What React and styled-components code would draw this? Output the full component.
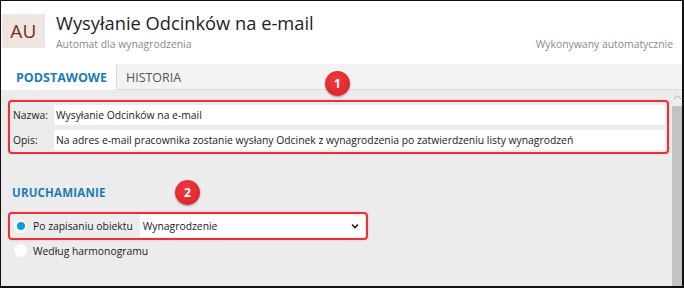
import React from "react";
import styled, { createGlobalStyle } from "styled-components";

const GlobalStyle = createGlobalStyle`
  html, body { margin: 0; padding: 0; background: #fff; }
  body { font-family: "Open Sans", "Noto Sans", sans-serif; }
`;

const Frame = styled.div`
  position: relative;
  width: 684px;
  height: 288px;
  box-sizing: border-box;
  border: 1px solid #111;
  border-right-width: 2px;
  border-bottom-width: 2px;
  display: flex;
  flex-direction: column;
  overflow: hidden;
  background: #ececec;
`;

const Header = styled.div`
  height: 63px;
  background: #fff;
  display: flex;
  align-items: flex-start;
  padding: 13px 9px 0 1px;
  box-sizing: border-box;
`;

const Avatar = styled.div`
  width: 43px;
  height: 34px;
  background: #efe5e2;
  color: #7b2d12;
  font-size: 19px;
  font-weight: 500;
  display: flex;
  align-items: center;
  justify-content: center;
  letter-spacing: 0.3px;
`;

const TitleBlock = styled.div`
  flex: 1;
  margin-left: 11px;
  display: flex;
  flex-direction: column;
`;

const Title = styled.div`
  font-size: 18.3px;
  color: #1e1e1e;
  line-height: 22px;
  margin-top: -2px;
`;

const SubRow = styled.div`
  display: flex;
  justify-content: space-between;
  font-size: 10.4px;
  color: #8a8a8a;
  margin-top: 3px;
`;

const TabBar = styled.div`
  height: 26px;
  background: #f3f3f3;
  border-bottom: 1px solid #dcdcdc;
  display: flex;
  box-sizing: border-box;
`;

const Tab = styled.div`
  padding: 0 9px 0 ${(p) => (p.$active ? "15px" : "9px")};
  display: flex;
  align-items: center;
  font-size: 12.5px;
  font-weight: ${(p) => (p.$active ? 700 : 400)};
  color: ${(p) => (p.$active ? "#1b7db3" : "#555")};
  background: ${(p) => (p.$active ? "#fff" : "transparent")};
  border-right: ${(p) => (p.$active ? "1px solid #dcdcdc" : "none")};
  height: 26px;
  box-sizing: border-box;
`;

const Body = styled.div`
  flex: 1;
  display: flex;
`;

const Content = styled.div`
  flex: 1;
  padding: 10px 3px 0 7px;
`;

const Scrollbar = styled.div`
  width: 10px;
  display: flex;
  flex-direction: column;
  align-items: center;
  padding-top: 4px;
`;

const Thumb = styled.div`
  margin-top: 6px;
  width: 10px;
  flex: 1;
  background: #c3c3c3;
`;

const Highlight = styled.div`
  border: 2px solid #e8323a;
  border-radius: 4px;
  box-shadow: 0 0 2px rgba(232, 50, 58, 0.35);
  width: ${(p) => p.$width || "auto"};
  margin-top: ${(p) => p.$mt || "0"};
  box-sizing: border-box;
`;

const FieldList = styled.div`
  display: flex;
  flex-direction: column;
  gap: 5px;
  padding: 3px 2px 2px 2px;
`;

const FieldRow = styled.div`
  display: flex;
  align-items: center;
`;

const Label = styled.div`
  width: 41px;
  font-size: 10.35px;
  color: #222;
  padding-left: 1px;
`;

const Input = styled.div`
  flex: 1;
  height: 20px;
  background: #fff;
  font-size: 10.35px;
  color: #1a1a1a;
  display: flex;
  align-items: center;
  padding-left: 2px;
`;

const Section = styled.div`
  margin-top: 31px;
  padding-left: 4px;
  font-size: 11.5px;
  font-weight: 700;
  color: #1b7db3;
  letter-spacing: 0.2px;
`;

const RadioRow = styled.div`
  display: flex;
  align-items: center;
  height: ${(p) => p.$h || "24px"};
  padding-left: ${(p) => p.$pl || "4px"};
`;

const Radio = styled.span`
  width: 13px;
  height: 13px;
  border-radius: 50%;
  background: #fff;
  box-sizing: border-box;
  display: flex;
  align-items: center;
  justify-content: center;
  margin-right: 6px;
  &::after {
    content: "";
    width: 8px;
    height: 8px;
    border-radius: 50%;
    background: ${(p) => (p.$checked ? "#0a9be0" : "transparent")};
  }
`;

const RadioLabel = styled.span`
  font-size: 10.35px;
  color: #222;
`;

const Select = styled.div`
  margin-left: 7px;
  flex: 1;
  height: 22px;
  margin-right: 1px;
  background: #fff;
  display: flex;
  align-items: center;
  justify-content: space-between;
  padding: 0 6px 0 3px;
  font-size: 10.35px;
  color: #1a1a1a;
`;

const Badge = styled.div`
  position: absolute;
  left: ${(p) => p.$x}px;
  top: ${(p) => p.$y}px;
  width: 25px;
  height: 25px;
  border-radius: 50%;
  background: radial-gradient(circle at 45% 35%, #ee3b40, #d81f26);
  box-shadow: 0 1px 2px rgba(0, 0, 0, 0.35);
  color: #fff;
  font-weight: 700;
  font-size: 12px;
  display: flex;
  align-items: center;
  justify-content: center;
`;

const Chevron = () => (
  <svg width="8" height="6" viewBox="0 0 8 6">
    <path d="M1 1.5 L4 4.5 L7 1.5" fill="none" stroke="#222" strokeWidth="1.6" />
  </svg>
);

const UpArrow = () => (
  <svg width="9" height="6" viewBox="0 0 9 6">
    <path d="M1 5 L4.5 1.5 L8 5" fill="none" stroke="#aaa" strokeWidth="1" />
  </svg>
);

const App = () => {
  return (
    <>
      <GlobalStyle />
      <Frame>
        <Header>
          <Avatar>AU</Avatar>
          <TitleBlock>
            <Title>Wysyłanie Odcinków na e-mail</Title>
            <SubRow>
              <span>Automat dla wynagrodzenia</span>
              <span>Wykonywany automatycznie</span>
            </SubRow>
          </TitleBlock>
        </Header>
        <TabBar>
          <Tab $active>PODSTAWOWE</Tab>
          <Tab>HISTORIA</Tab>
        </TabBar>
        <Body>
          <Content>
            <Highlight>
              <FieldList>
                <FieldRow>
                  <Label>Nazwa:</Label>
                  <Input>Wysyłanie Odcinków na e-mail</Input>
                </FieldRow>
                <FieldRow>
                  <Label>Opis:</Label>
                  <Input>
                    Na adres e-mail pracownika zostanie wysłany Odcinek z wynagrodzenia po zatwierdzeniu listy wynagrodzeń
                  </Input>
                </FieldRow>
              </FieldList>
            </Highlight>
            <Section>URUCHAMIANIE</Section>
            <Highlight $width="360px" $mt="12px">
              <RadioRow $h="24px">
                <Radio $checked />
                <RadioLabel>Po zapisaniu obiektu</RadioLabel>
                <Select>
                  <span>Wynagrodzenie</span>
                  <Chevron />
                </Select>
              </RadioRow>
            </Highlight>
            <RadioRow $h="21px" $pl="6px">
              <Radio />
              <RadioLabel>Według harmonogramu</RadioLabel>
            </RadioRow>
          </Content>
          <Scrollbar>
            <UpArrow />
            <Thumb />
          </Scrollbar>
        </Body>
        <Badge $x={324} $y={70}>1</Badge>
        <Badge $x={174} $y={179}>2</Badge>
      </Frame>
    </>
  );
};

export default App;
